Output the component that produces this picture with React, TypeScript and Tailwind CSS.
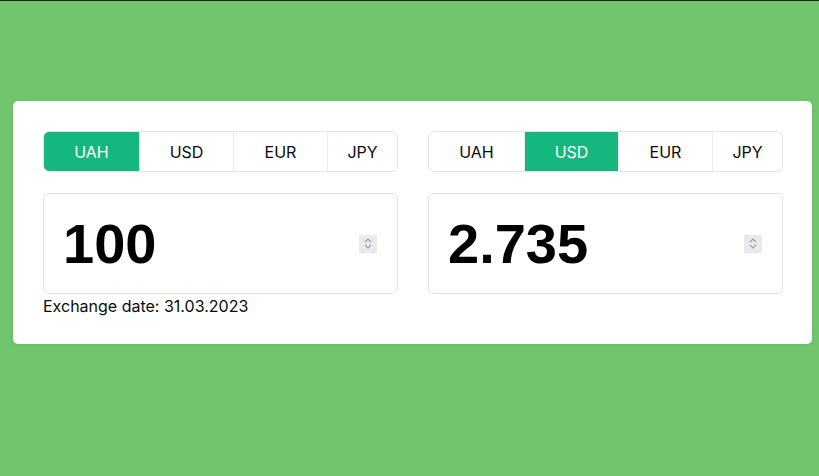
const currencies = ["UAH", "USD", "EUR", "JPY"];
const widths = ["w-[95px]", "w-[94px]", "w-[94px]", "flex-1"];

function Tabs({ active }: { active: string }) {
  return (
    <div className="flex h-[41px] rounded-[6px] border border-[#e3e3e3] overflow-hidden">
      {currencies.map((c, i) => (
        <div
          key={c}
          className={`${widths[i]} flex items-center justify-center text-[16px] ${
            c === active ? "bg-[#16b77f] text-white" : "text-[#0a0a0a]"
          } ${i > 0 ? "border-l border-[#ececec]" : ""}`}
        >
          {c}
        </div>
      ))}
    </div>
  );
}

function Spinner() {
  return (
    <div className="w-[18px] h-[18px] bg-[#e9e9ee] flex flex-col items-center justify-center gap-[1px]">
      <svg width="8" height="5" viewBox="0 0 8 5" fill="none">
        <path d="M1 4.2 4 1.2 7 4.2" stroke="#9a9aa6" strokeWidth="1.2" />
      </svg>
      <svg width="8" height="5" viewBox="0 0 8 5" fill="none">
        <path d="M1 0.8 4 3.8 7 0.8" stroke="#9a9aa6" strokeWidth="1.2" />
      </svg>
    </div>
  );
}

function Amount({ value }: { value: string }) {
  return (
    <div className="mt-[21px] h-[101px] rounded-[6px] border border-[#e3e3e3] flex items-center justify-between pl-[19px] pr-[20px]">
      <span className="font-['Liberation_Sans',Arial,sans-serif] text-[56px] font-bold text-black leading-none">
        {value}
      </span>
      <Spinner />
    </div>
  );
}

export default function App() {
  return (
    <div className="min-h-[476px] bg-[#71c66d] border-t border-[#1c1c1c] pt-[100px] font-['Inter',sans-serif]">
      <div className="ml-[13px] w-[799px] bg-white rounded-[5px] shadow-[0_1px_4px_rgba(0,0,0,0.08)] flex gap-[30px] pt-[30px] pl-[30px] pr-[29px] pb-[26px]">
        <div className="flex-1">
          <Tabs active="UAH" />
          <Amount value="100" />
          <p className="text-[16px] leading-6 text-[#0a0a0a]">Exchange date: 31.03.2023</p>
        </div>
        <div className="flex-1">
          <Tabs active="USD" />
          <Amount value="2.735" />
        </div>
      </div>
    </div>
  );
}
